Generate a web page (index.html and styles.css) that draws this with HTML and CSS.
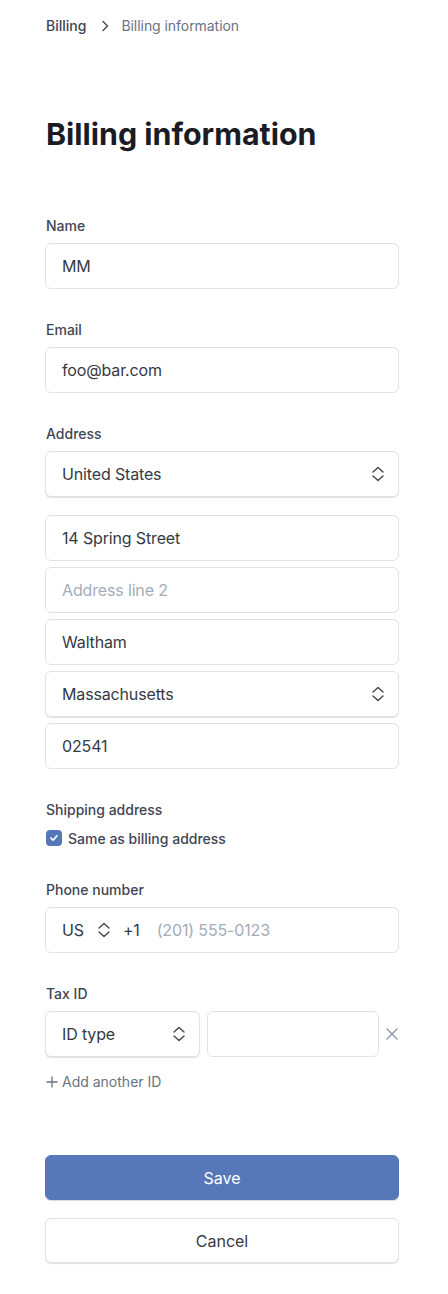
FILE: index.html
```html
<!DOCTYPE html>
<html>
<head>
<meta charset="utf-8">
<link rel="stylesheet" href="styles.css">
</head>
<body>
<div class="page">
  <nav class="crumbs">
    <span class="crumb-root">Billing</span>
    <svg class="crumb-sep" width="16" height="16" viewBox="0 0 16 16"><path d="M6 3.5 10.5 8 6 12.5" fill="none" stroke="#414552" stroke-width="1.4" stroke-linecap="round" stroke-linejoin="round"/></svg>
    <span class="crumb-current">Billing information</span>
  </nav>

  <h1 class="title">Billing information</h1>

  <form class="form">
    <div class="group">
      <label class="label">Name</label>
      <div class="field"><span class="value">MM</span></div>
    </div>

    <div class="group">
      <label class="label">Email</label>
      <div class="field"><span class="value">foo@bar.com</span></div>
    </div>

    <div class="group">
      <label class="label">Address</label>
      <div class="field select"><span class="value">United States</span>
        <svg class="updown" width="16" height="16" viewBox="0 0 16 16"><path d="M3 6 8 1.5 13 6M3 10 8 14.5 13 10" fill="none" stroke="#414552" stroke-width="1.4" stroke-linecap="round" stroke-linejoin="round"/></svg>
      </div>
      <div class="stack">
        <div class="field"><span class="value">14 Spring Street</span></div>
        <div class="field"><span class="placeholder">Address line 2</span></div>
        <div class="field"><span class="value">Waltham</span></div>
        <div class="field select"><span class="value">Massachusetts</span>
          <svg class="updown" width="16" height="16" viewBox="0 0 16 16"><path d="M3 6 8 1.5 13 6M3 10 8 14.5 13 10" fill="none" stroke="#414552" stroke-width="1.4" stroke-linecap="round" stroke-linejoin="round"/></svg>
        </div>
        <div class="field"><span class="value">02541</span></div>
      </div>
    </div>

    <div class="group">
      <label class="label">Shipping address</label>
      <div class="check-row">
        <span class="checkbox"><svg width="10" height="10" viewBox="0 0 10 10"><path d="M2 5.2 4.1 7.2 8 2.8" fill="none" stroke="#fff" stroke-width="1.7" stroke-linecap="round" stroke-linejoin="round"/></svg></span>
        <span class="check-text">Same as billing address</span>
      </div>
    </div>

    <div class="group">
      <label class="label">Phone number</label>
      <div class="field phone">
        <span class="value">US</span>
        <svg class="updown-inline" width="16" height="16" viewBox="0 0 16 16"><path d="M3 6 8 1.5 13 6M3 10 8 14.5 13 10" fill="none" stroke="#414552" stroke-width="1.4" stroke-linecap="round" stroke-linejoin="round"/></svg>
        <span class="value">+1</span>
        <span class="placeholder phone-ph">(201) 555-0123</span>
      </div>
    </div>

    <div class="group">
      <label class="label">Tax ID</label>
      <div class="tax-row">
        <div class="field select tax-type"><span class="value">ID type</span>
          <svg class="updown" width="16" height="16" viewBox="0 0 16 16"><path d="M3 6 8 1.5 13 6M3 10 8 14.5 13 10" fill="none" stroke="#414552" stroke-width="1.4" stroke-linecap="round" stroke-linejoin="round"/></svg>
        </div>
        <div class="field tax-value"></div>
        <svg class="remove" width="12" height="12" viewBox="0 0 12 12"><path d="M1 1 11 11M11 1 1 11" stroke="#8a93a3" stroke-width="1.3" stroke-linecap="round"/></svg>
      </div>
      <div class="add-id">
        <svg width="12" height="12" viewBox="0 0 12 12"><path d="M6 0.5V11.5M0.5 6H11.5" stroke="#687385" stroke-width="1.3"/></svg>
        <span>Add another ID</span>
      </div>
    </div>

    <div class="actions">
      <button type="button" class="btn btn-primary">Save</button>
      <button type="button" class="btn btn-secondary">Cancel</button>
    </div>
  </form>
</div>
</body>
</html>
```

FILE: styles.css
```css
* { box-sizing: border-box; }
html, body { margin: 0; padding: 0; background: #fff; }
body {
  font-family: Inter, "Noto Sans", "Liberation Sans", sans-serif;
  color: #353a44;
  -webkit-font-smoothing: antialiased;
}
.page {
  width: 354px;
  margin-left: 45px;
  padding-top: 16px;
  padding-bottom: 31px;
}
.crumbs {
  display: flex;
  align-items: center;
  height: 20px;
  font-size: 14px;
  line-height: 20px;
  padding-left: 1px;
}
.crumb-root { color: #414552; font-weight: 500; }
.crumb-sep { margin: 0 8px 0 11px; }
.crumb-current { color: #687385; letter-spacing: -0.05px; }
.title {
  margin: 80px 0 0 1px;
  font-size: 30.4px;
  line-height: 36px;
  font-weight: 700;
  color: #1a1b25;
  letter-spacing: 0;
}
.form { margin-top: 64px; display: flex; flex-direction: column; }
.group { display: flex; flex-direction: column; margin-bottom: 31px; }
.label {
  font-size: 14px;
  line-height: 20px;
  font-weight: 500;
  color: #414552;
  margin: 0 0 7px 1px;
}
.field {
  display: flex;
  align-items: center;
  height: 46px;
  border: 1px solid #e0e2e8;
  border-radius: 6px;
  padding: 0 16px;
  font-size: 16px;
  line-height: 24px;
  letter-spacing: -0.15px;
  background: #fff;
}
.value { color: #353a44; }
.placeholder { color: #a3acba; }
.select {
  justify-content: space-between;
  padding-right: 12px;
  box-shadow: 0 1px 1px rgba(0, 0, 0, 0.12);
}
.updown { flex: none; }
.stack { display: flex; flex-direction: column; gap: 6px; margin-top: 18px; }
.check-row {
  display: flex;
  align-items: center;
  height: 20px;
  margin-top: 1px;
  margin-bottom: 1px;
  padding-left: 1px;
}
.checkbox {
  width: 16px;
  height: 16px;
  border-radius: 4px;
  background: #5677b8;
  display: flex;
  align-items: center;
  justify-content: center;
  margin-right: 6px;
}
.check-text { font-size: 14px; color: #414552; font-weight: 500; }
.phone .updown-inline { flex: none; margin: 0 11px 0 12px; }
.phone-ph { margin-left: 17px; }
.tax-row { display: flex; align-items: center; }
.tax-type { width: 155px; flex: none; }
.tax-value { width: 172px; flex: none; margin-left: 7px; }
.remove { flex: none; margin-left: 7px; }
.add-id {
  display: flex;
  align-items: center;
  margin-top: 15px;
  padding-left: 1px;
  font-size: 14px;
  line-height: 20px;
  color: #687385;
}
.add-id svg { margin-right: 4px; }
.actions { display: flex; flex-direction: column; gap: 18px; margin-top: 32px; }
.btn {
  height: 45px;
  width: 100%;
  border-radius: 6px;
  font-family: inherit;
  font-size: 16px;
  font-weight: 400;
  cursor: pointer;
}
.btn-primary {
  background: #5677b8;
  color: #fff;
  border: 1px solid #5677b8;
  box-shadow: 0 1px 1px rgba(0, 0, 0, 0.15);
}
.btn-secondary {
  background: #fff;
  color: #353a44;
  border: 1px solid #e0e2e8;
  box-shadow: 0 1px 1px rgba(0, 0, 0, 0.12);
}
```
